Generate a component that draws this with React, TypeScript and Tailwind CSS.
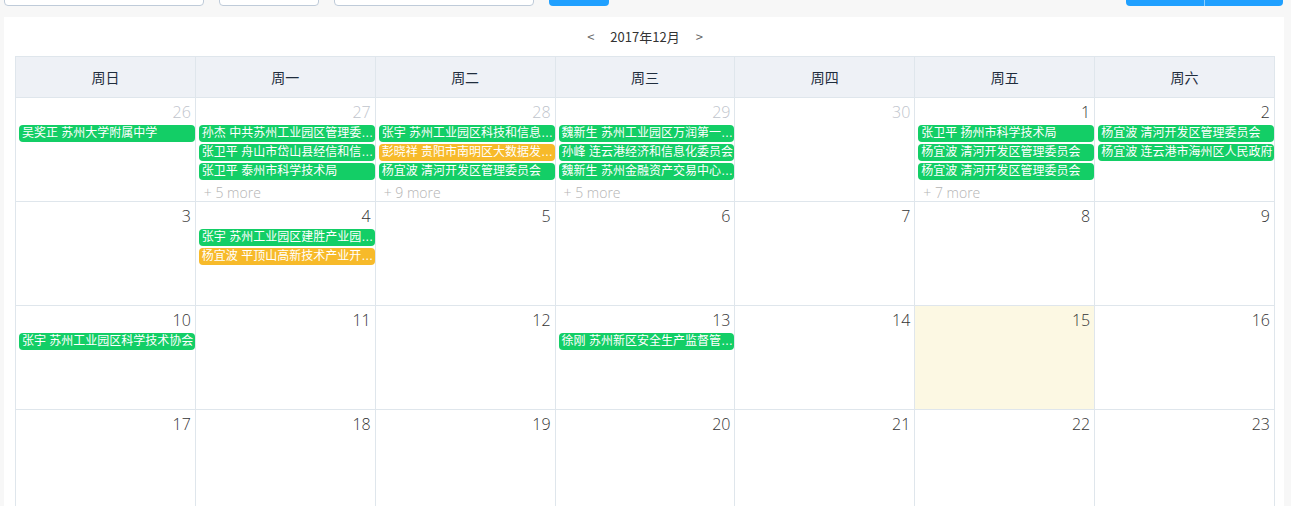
import React from "react";

type Ev = { t: string; c?: "o" };
type Day = { d: number; other?: boolean; today?: boolean; ev?: Ev[]; more?: number };

const weeks: Day[][] = [
  [
    { d: 26, other: true, ev: [{ t: "吴奖正 苏州大学附属中学" }] },
    {
      d: 27,
      other: true,
      ev: [
        { t: "孙杰 中共苏州工业园区管理委员会" },
        { t: "张卫平 舟山市岱山县经信和信息化局" },
        { t: "张卫平 泰州市科学技术局" },
      ],
      more: 5,
    },
    {
      d: 28,
      other: true,
      ev: [
        { t: "张宇 苏州工业园区科技和信息化局" },
        { t: "彭晓祥 贵阳市南明区大数据发展局", c: "o" },
        { t: "杨宜波 清河开发区管理委员会" },
      ],
      more: 9,
    },
    {
      d: 29,
      other: true,
      ev: [
        { t: "魏新生 苏州工业园区万润第一小学" },
        { t: "孙峰 连云港经济和信息化委员会" },
        { t: "魏新生 苏州金融资产交易中心有限公司" },
      ],
      more: 5,
    },
    { d: 30, other: true },
    {
      d: 1,
      ev: [
        { t: "张卫平 扬州市科学技术局" },
        { t: "杨宜波 清河开发区管理委员会" },
        { t: "杨宜波 清河开发区管理委员会" },
      ],
      more: 7,
    },
    {
      d: 2,
      ev: [{ t: "杨宜波 清河开发区管理委员会" }, { t: "杨宜波 连云港市海州区人民政府" }],
    },
  ],
  [
    { d: 3 },
    {
      d: 4,
      ev: [
        { t: "张宇 苏州工业园区建胜产业园管理处" },
        { t: "杨宜波 平顶山高新技术产业开发区管委会", c: "o" },
      ],
    },
    { d: 5 },
    { d: 6 },
    { d: 7 },
    { d: 8 },
    { d: 9 },
  ],
  [
    { d: 10, ev: [{ t: "张宇 苏州工业园区科学技术协会" }] },
    { d: 11 },
    { d: 12 },
    { d: 13, ev: [{ t: "徐刚 苏州新区安全生产监督管理局" }] },
    { d: 14 },
    { d: 15, today: true },
    { d: 16 },
  ],
  [
    { d: 17 },
    { d: 18 },
    { d: 19 },
    { d: 20 },
    { d: 21 },
    { d: 22 },
    { d: 23 },
  ],
];

const heads = ["周日", "周一", "周二", "周三", "周四", "周五", "周六"];

export default function App() {
  return (
    <div
      className="h-screen w-full overflow-hidden bg-[#f7f7f7]"
      style={{ fontFamily: '"Noto Sans CJK SC", "Liberation Sans", sans-serif' }}
    >
      {/* top toolbar (mostly scrolled off) */}
      <div className="flex h-[6px] items-end justify-between overflow-hidden px-1">
        <div className="flex items-end gap-[15px]">
          <div className="h-9 w-[200px] rounded border border-[#bfcbd9] bg-white" />
          <div className="h-9 w-[100px] rounded border border-[#bfcbd9] bg-white" />
          <div className="h-9 w-[200px] rounded border border-[#bfcbd9] bg-white" />
          <div className="h-9 w-[60px] rounded bg-[#20a0ff]" />
        </div>
        <div className="mr-[4px] flex h-9 items-end">
          <div className="h-9 w-[78px] rounded-l bg-[#20a0ff]" />
          <div className="h-9 w-px bg-[#8ccfff]" />
          <div className="h-9 w-[78px] rounded-r bg-[#20a0ff]" />
        </div>
      </div>

      <div className="ml-1 mt-[11px] w-[1280px] bg-white pl-[11px] pr-[9px] pb-4">
        <div className="flex h-[39px] items-center justify-center text-[13px]">
          <span className="px-2 text-[#666]">&lt;</span>
          <span className="mx-2 text-[#333]">2017年12月</span>
          <span className="px-2 text-[#666]">&gt;</span>
        </div>
        <div className="grid w-[1260px] grid-cols-7 border-l border-t border-[#dfe6ec]">
          {heads.map((h) => (
            <div
              key={h}
              className="flex h-[41px] items-center justify-center border-b border-r border-[#dfe6ec] bg-[#eef1f6] text-[14px] text-[#1f2d3d]"
            >
              {h}
            </div>
          ))}
          {weeks.flat().map((day, i) => (
            <div
              key={i}
              className={`h-[104px] overflow-hidden border-b border-r border-[#dfe6ec] ${
                day.today ? "bg-[#fcf8e3]" : "bg-white"
              }`}
            >
              <div
                className={`h-[27px] pr-[4px] pt-[2px] text-right text-[16px] font-light leading-[24px] ${
                  day.other ? "text-[#c0c4cc]" : "text-[#333]"
                }`}
                style={{ fontFamily: '"Open Sans", "Noto Sans CJK SC", sans-serif' }}
              >
                {day.d}
              </div>
              <div className="flex flex-col gap-[2px] pl-[3px]">
                {(day.ev || []).map((e, j) => (
                  <div
                    key={j}
                    className={`h-[17px] truncate rounded-[4px] pl-[3px] pr-[1px] text-[12px] leading-[17px] text-white ${
                      e.c === "o" ? "bg-[#f7ba2a]" : "bg-[#13ce66]"
                    }`}
                    style={{ fontFamily: '"Liberation Sans", "Noto Sans CJK SC", sans-serif' }}
                  >
                    {e.t}
                  </div>
                ))}
              </div>
              {day.more ? (
                <div
                  className="pl-[8px] pt-[5px] text-[14px] font-light leading-[16px] text-[#b4b4b4]"
                  style={{ fontFamily: '"Open Sans", "Noto Sans CJK SC", sans-serif' }}
                >
                  + {day.more} more
                </div>
              ) : null}
            </div>
          ))}
        </div>
      </div>
    </div>
  );
}
